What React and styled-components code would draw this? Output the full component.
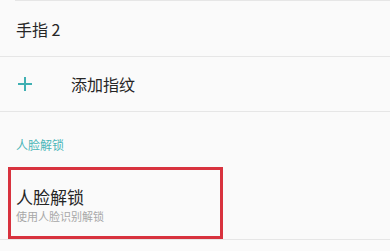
import React from "react";
import styled, { createGlobalStyle } from "styled-components";

const Global = createGlobalStyle`
  html, body { margin: 0; padding: 0; background: #fafafa; }
  body { font-family: "Noto Sans CJK SC", "Noto Sans", sans-serif; }
`;

const Page = styled.div`
  width: 390px;
  height: 251px;
  overflow: hidden;
  background: #fafafa;
  display: flex;
  flex-direction: column;
`;

const Divider = styled.div`
  height: 1px;
  flex: none;
  background: #e6e6e6;
  margin-left: ${(p) => p.$inset || 0}px;
`;

const Row = styled.div`
  height: ${(p) => p.$h}px;
  flex: none;
  display: flex;
  align-items: center;
  padding-left: 16px;
  box-sizing: border-box;
`;

const Title = styled.span`
  font-size: ${(p) => p.$size || 15}px;
  color: #262626;
  line-height: 1;
`;

const PlusIcon = styled.span`
  width: 14px;
  height: 14px;
  margin-left: 2px;
  margin-right: 39px;
  position: relative;
  flex: none;
  &::before, &::after {
    content: "";
    position: absolute;
    background: #3fb0b3;
  }
  &::before { left: 0; right: 0; top: 6px; height: 2px; }
  &::after { top: 0; bottom: 0; left: 6px; width: 2px; }
`;

const SectionHeader = styled.div`
  height: 55px;
  flex: none;
  display: flex;
  align-items: center;
  padding-left: 16px;
  padding-top: 10px;
  box-sizing: border-box;
  font-size: 12px;
  color: #4cb6b8;
`;

const Highlight = styled.div`
  height: 72px;
  width: 215px;
  margin-left: 8px;
  flex: none;
  box-sizing: border-box;
  border: 3px solid #d8323e;
  display: flex;
  flex-direction: column;
  justify-content: center;
  padding-left: 5px;
  padding-top: 4px;
  gap: 6px;
`;

const SubText = styled.span`
  font-size: 11px;
  color: #a8a8a8;
  line-height: 1;
`;

export default function App() {
  return (
    <>
      <Global />
      <Page>
        <Divider $inset={15} />
        <Row $h={55}>
          <Title $size={16}>手指 2</Title>
        </Row>
        <Divider />
        <Row $h={54}>
          <PlusIcon />
          <Title $size={16}>添加指纹</Title>
        </Row>
        <Divider />
        <SectionHeader>人脸解锁</SectionHeader>
        <Highlight>
          <Title $size={17}>人脸解锁</Title>
          <SubText>使用人脸识别解锁</SubText>
        </Highlight>
        <Divider />
      </Page>
    </>
  );
}
